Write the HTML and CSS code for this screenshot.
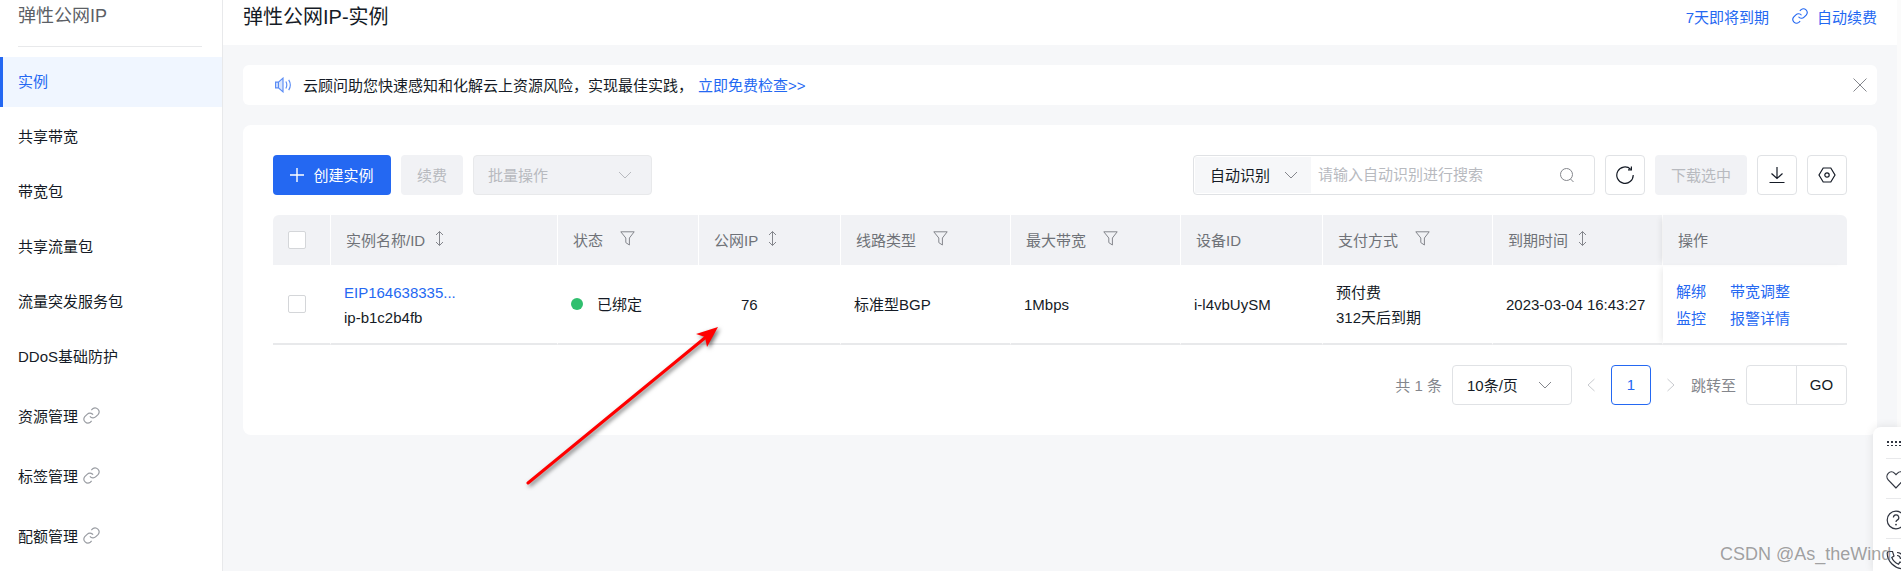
FILE: index.html
```html
<!DOCTYPE html>
<html lang="zh-CN">
<head>
    <meta charset="UTF-8">
    <title>弹性公网IP-实例</title>
    <link rel="stylesheet" href="styles.css">
</head>
<body>
    <svg class="icon-defs" width="0" height="0">
        <symbol id="i-chevron" viewBox="0 0 14 8"><path d="M1 1l6 6 6-6" fill="none" stroke="currentColor"/></symbol>
        <symbol id="i-filter" viewBox="0 0 15 15"><path d="M.8.8h13.4L9.4 7v7L5.8 11.6V7z" fill="none" stroke="currentColor"/></symbol>
        <symbol id="i-sort" viewBox="0 0 9 15"><path d="M4.5.5v14M1 4l3.5-3.5L8 4M1 11l3.5 3.5L8 11" fill="none" stroke="currentColor"/></symbol>
        <symbol id="i-link" viewBox="0 0 24 24"><path d="M10 13a5 5 0 0 0 7.5.5l3-3a5 5 0 0 0-7-7l-1.7 1.7M14 11a5 5 0 0 0-7.5-.5l-3 3a5 5 0 0 0 7 7l1.7-1.7" fill="none" stroke="currentColor" stroke-width="1.5"/></symbol>
    </svg>

    <div class="app">
        <aside class="sidebar">
            <div class="sidebar-title">弹性公网IP</div>
            <nav class="side-nav">
                <a class="nav-item active">实例</a>
                <a class="nav-item">共享带宽</a>
                <a class="nav-item">带宽包</a>
                <a class="nav-item">共享流量包</a>
                <a class="nav-item">流量突发服务包</a>
                <a class="nav-item">DDoS基础防护</a>
                <a class="nav-item nav-ext">资源管理 <svg class="ext-icon"><use href="#i-link"/></svg></a>
                <a class="nav-item nav-ext">标签管理 <svg class="ext-icon"><use href="#i-link"/></svg></a>
                <a class="nav-item nav-ext">配额管理 <svg class="ext-icon"><use href="#i-link"/></svg></a>
            </nav>
        </aside>

        <main class="main">
            <header class="page-head">
                <h1 class="page-title">弹性公网IP-实例</h1>
                <div class="head-actions">
                    <a class="link">7天即将到期</a>
                    <a class="link head-renew"><svg class="renew-icon"><use href="#i-link"/></svg>自动续费</a>
                </div>
            </header>

            <div class="content">
                <div class="notice">
                    <svg class="notice-icon" viewBox="0.5 1.5 14 13">
                        <path d="M1 5.5h2.5L7.5 2v12l-4-3.5H1zM3.5 5.5v5" fill="#dbe7fd" stroke="#5a8cf5"/>
                        <path d="M10 5c1 1.8 1 4.2 0 6M12.5 3.5c1.7 2.7 1.7 6.3 0 9" fill="none" stroke="#5a8cf5"/>
                    </svg>
                    <span class="notice-text">云顾问助您快速感知和化解云上资源风险，实现最佳实践，</span>
                    <a class="link notice-link">立即免费检查&gt;&gt;</a>
                    <svg class="notice-close" viewBox="0 0 14 14"><path d="M.5.5l13 13M13.5.5l-13 13" fill="none" stroke="currentColor"/></svg>
                </div>

                <section class="card">
                    <div class="toolbar">
                        <div class="tool-group">
                            <button class="btn btn-primary">
                                <svg class="plus-icon" viewBox="0 0 14 14"><path d="M7 0v14M0 7h14" fill="none" stroke="#fff" stroke-width="1.4"/></svg>创建实例
                            </button>
                            <button class="btn btn-disabled btn-renew">续费</button>
                            <div class="bulk-select">批量操作<svg class="chevron"><use href="#i-chevron"/></svg></div>
                        </div>
                        <div class="tool-group">
                            <div class="search">
                                <div class="search-type">自动识别<svg class="chevron"><use href="#i-chevron"/></svg></div>
                                <input class="search-input" placeholder="请输入自动识别进行搜索">
                                <svg class="search-icon" viewBox="0 0 16 16"><circle cx="7.5" cy="7.5" r="6" fill="none" stroke="currentColor"/><path d="M11.5 12l3 3" stroke="currentColor"/></svg>
                            </div>
                            <button class="icon-btn">
                                <svg viewBox="0 0 18 18"><path d="M14.6 3.2A8.2 8.2 0 1 0 17.2 9" fill="none" stroke="#151b26" stroke-width="1.2"/><path d="M15.4.4v3.4H12" fill="none" stroke="#151b26" stroke-width="1.2"/></svg>
                            </button>
                            <button class="btn btn-disabled btn-download">下载选中</button>
                            <button class="icon-btn">
                                <svg viewBox="0 0 18 18"><path d="M9 1v11.5M3.5 7.5L9 12.5l5.5-5M1.5 16.5h15" fill="none" stroke="#151b26" stroke-width="1.2"/></svg>
                            </button>
                            <button class="icon-btn">
                                <svg viewBox="0 0 18 18"><path d="M5.2 2h7.6L17 9l-4.2 7H5.2L1 9z" fill="none" stroke="#151b26" stroke-width="1.2"/><circle cx="9" cy="9" r="2.2" fill="none" stroke="#151b26" stroke-width="1.2"/></svg>
                            </button>
                        </div>
                    </div>

                    <table class="eip-table">
                        <colgroup>
                            <col class="col-check"><col class="col-name"><col class="col-status"><col class="col-ip">
                            <col class="col-wide"><col class="col-wide"><col class="col-ip"><col class="col-wide">
                            <col class="col-wide"><col class="col-op">
                        </colgroup>
                        <thead>
                            <tr>
                                <th class="cell-check"><span class="checkbox"></span></th>
                                <th>实例名称/ID<svg class="sort-icon"><use href="#i-sort"/></svg></th>
                                <th>状态<svg class="filter-icon"><use href="#i-filter"/></svg></th>
                                <th>公网IP<svg class="sort-icon"><use href="#i-sort"/></svg></th>
                                <th>线路类型<svg class="filter-icon"><use href="#i-filter"/></svg></th>
                                <th>最大带宽<svg class="filter-icon"><use href="#i-filter"/></svg></th>
                                <th>设备ID</th>
                                <th>支付方式<svg class="filter-icon"><use href="#i-filter"/></svg></th>
                                <th>到期时间<svg class="sort-icon"><use href="#i-sort"/></svg></th>
                                <th class="cell-op">操作</th>
                            </tr>
                        </thead>
                        <tbody>
                            <tr>
                                <td class="cell-check"><span class="checkbox"></span></td>
                                <td><a class="link">EIP164638335...</a><br>ip-b1c2b4fb</td>
                                <td><span class="status-dot"></span>已绑定</td>
                                <td><span class="ip-text">76</span></td>
                                <td>标准型BGP</td>
                                <td>1Mbps</td>
                                <td>i-l4vbUySM</td>
                                <td>预付费<br>312天后到期</td>
                                <td>2023-03-04 16:43:27</td>
                                <td class="cell-op">
                                    <div class="op-links">
                                        <a class="link">解绑</a><a class="link">带宽调整</a>
                                        <a class="link">监控</a><a class="link">报警详情</a>
                                    </div>
                                </td>
                            </tr>
                        </tbody>
                    </table>

                    <div class="pagination">
                        <span class="page-muted">共 1 条</span>
                        <div class="page-size">10条/页<svg class="chevron"><use href="#i-chevron"/></svg></div>
                        <svg class="page-arrow" viewBox="0 0 8 14"><path d="M7.5 1L1 7l6.5 6" fill="none" stroke="currentColor"/></svg>
                        <span class="page-current">1</span>
                        <svg class="page-arrow" viewBox="0 0 8 14"><path d="M.5 1L7 7l-6.5 6" fill="none" stroke="currentColor"/></svg>
                        <span class="page-muted page-jump-label">跳转至</span>
                        <div class="page-jump"><span class="jump-input"></span><span class="jump-go">GO</span></div>
                    </div>
                </section>
            </div>
        </main>
        <div class="scroll-strip"></div>
    </div>

    <div class="float-panel">
        <div class="float-item float-drag"><span class="drag-dots"></span></div>
        <div class="float-item">
            <svg viewBox="0 0 20 20"><path d="M10 18L2.2 9.8a4.8 4.8 0 0 1 0-6.5 4.6 4.6 0 0 1 6.5 0L10 4.600l1.3-1.3a4.6 4.6 0 0 1 6.5 0 4.8 4.8 0 0 1 0 6.5z" fill="none" stroke="#303540" stroke-width="1.2"/></svg>
        </div>
        <div class="float-item">
            <svg viewBox="0 0 20 20"><circle cx="10" cy="10" r="8.8" fill="none" stroke="#303540" stroke-width="1.2"/><path d="M7.4 7.6a2.7 2.7 0 1 1 3.8 2.5c-.8.4-1.2 1-1.2 1.9" fill="none" stroke="#303540" stroke-width="1.2"/><circle cx="10" cy="14.6" r=".9" fill="#303540"/></svg>
        </div>
        <div class="float-item">
            <svg viewBox="0 0 20 20"><path d="M3 1.5h3.5L8 6 5.8 7.5c1 2.8 3.5 5.3 6.7 6.7L14 12l4.500 1.500V17c0 1-.8 1.800-2 1.800C8.500 18.500 1.500 11.500 1.200 3.500c0-1 .8-2 1.800-2z" fill="none" stroke="#303540" stroke-width="1.2"/><path d="M11 2.500a6.500 6.500 0 0 1 6.500 6.500M11 5.500A3.500 3.500 0 0 1 14.500 9" fill="none" stroke="#303540" stroke-width="1.2"/></svg>
        </div>
    </div>

    <svg class="red-arrow" viewBox="0 0 205 170">
        <path d="M8 163L186 17" fill="none" stroke="#f00" stroke-width="3" stroke-linecap="round"/>
        <path d="M198 7L176 14l9 3 2 10z" fill="#f00"/>
    </svg>
    <div class="watermark">CSDN @As_theWind</div>
</body>
</html>
```

FILE: styles.css
```css
* {
    box-sizing: border-box;
}
html,
body {
    margin: 0;
    height: 100%;
    overflow: hidden;
}
body {
    position: relative;
    font-family: "Liberation Sans", "Noto Sans CJK SC", sans-serif;
    font-size: 15px;
    color: #151b26;
    background: #f6f7f9;
}
.icon-defs {
    position: absolute;
}
.app {
    display: flex;
    height: 571px;
}
.link {
    color: #2468f2;
}

/* sidebar */
.sidebar {
    width: 223px;
    flex: none;
    background: #fff;
    border-right: 1px solid #e8e9eb;
}
.sidebar-title {
    height: 47px;
    margin: 0 20px 10px 18px;
    border-bottom: 1px solid #e8e9eb;
    font-size: 18px;
    line-height: 32px;
    color: #5c5f66;
}
.nav-item {
    display: flex;
    align-items: center;
    gap: 4px;
    height: 50px;
    margin-bottom: 5px;
    padding: 0 0 4px 18px;
}
.nav-item.active {
    color: #2468f2;
    background: #f0f6ff;
    border-left: 3px solid #2468f2;
    padding-left: 15px;
}
.nav-ext {
    height: 60px;
    margin-bottom: 0;
}
.ext-icon {
    width: 19px;
    height: 19px;
    color: #9a9da3;
}

/* page */
.main {
    flex: 1;
    min-width: 0;
}
.scroll-strip {
    width: 4px;
    flex: none;
    background: #fbfbfb;
}
.page-head {
    display: flex;
    justify-content: space-between;
    height: 45px;
    padding: 0 20px;
    background: #fff;
}
.page-title {
    margin: 0;
    padding-top: 1px;
    font-size: 20px;
    font-weight: normal;
    line-height: 32px;
}
.head-actions {
    display: flex;
    align-items: center;
    gap: 22px;
    height: 32px;
}
.head-renew {
    display: flex;
    align-items: center;
    gap: 8px;
}
.renew-icon {
    width: 18px;
    height: 18px;
}
.content {
    padding: 20px;
}

/* notice */
.notice {
    display: flex;
    align-items: center;
    height: 40px;
    padding: 0 10px 0 32px;
    background: #fff;
    border-radius: 6px;
}
.notice-icon {
    width: 16px;
    height: 16px;
    margin-right: 12px;
}
.notice-text,
.notice-link {
    padding-bottom: 2px;
}
.notice-text {
    margin-right: 5px;
}
.notice-close {
    width: 14px;
    height: 14px;
    margin-left: auto;
    color: #84868c;
}

/* card */
.card {
    margin-top: 20px;
    padding: 30px;
    background: #fff;
    border-radius: 8px;
}
.toolbar {
    display: flex;
    justify-content: space-between;
}
.tool-group {
    display: flex;
    gap: 10px;
}
.btn {
    height: 40px;
    padding: 0 0 2px;
    border: 0;
    border-radius: 4px;
    font: inherit;
}
.btn-primary {
    display: flex;
    align-items: center;
    justify-content: center;
    gap: 9px;
    width: 118px;
    color: #fff;
    background: #2468f2;
}
.plus-icon {
    width: 14px;
    height: 14px;
    margin-top: 2px;
}
.btn-disabled {
    color: #b8babf;
    background: #f1f2f5;
}
.btn-renew {
    width: 62px;
}
.btn-download {
    width: 92px;
}
.bulk-select {
    display: flex;
    align-items: center;
    justify-content: space-between;
    width: 179px;
    height: 40px;
    padding: 0 19px 2px 14px;
    color: #b8babf;
    background: #f1f2f5;
    border: 1px solid #e8e9eb;
    border-radius: 4px;
}
.chevron {
    width: 14px;
    height: 8px;
    flex: none;
    margin-top: 2px;
    color: #84868c;
}
.bulk-select .chevron {
    color: #b8babf;
}
.search {
    display: flex;
    align-items: center;
    width: 402px;
    height: 40px;
    border: 1px solid #e0e2e5;
    border-radius: 4px;
    padding: 1px;
}
.search-type {
    display: flex;
    align-items: center;
    gap: 14px;
    height: 100%;
    width: 116px;
    flex: none;
    padding: 0 0 2px 15px;
    background: #f6f7f9;
}
.search-input {
    flex: 1;
    min-width: 0;
    height: 100%;
    padding: 0 7px 2px;
    border: 0;
    outline: 0;
    font: inherit;
}
.search-input::placeholder {
    color: #b8babf;
}
.search-icon {
    width: 16px;
    height: 16px;
    flex: none;
    margin-right: 18px;
    color: #84868c;
}
.icon-btn {
    display: flex;
    align-items: center;
    justify-content: center;
    width: 40px;
    height: 40px;
    padding: 0;
    background: #fff;
    border: 1px solid #e0e2e5;
    border-radius: 4px;
}
.icon-btn svg {
    width: 18px;
    height: 18px;
}

/* table */
.eip-table {
    width: 100%;
    margin-top: 20px;
    table-layout: fixed;
    border-collapse: separate;
    border-spacing: 0;
}
.col-check { width: 58px; }
.col-name { width: 227px; }
.col-status { width: 141px; }
.col-ip { width: 142px; }
.col-wide { width: 170px; }
.col-op { width: 184px; }
.eip-table th {
    height: 50px;
    padding: 0 15px 2px;
    font-weight: normal;
    text-align: left;
    color: #6f7278;
    background: #f1f2f5;
    border-right: 1px solid #fff;
    white-space: nowrap;
}
.eip-table th:first-child {
    border-top-left-radius: 6px;
}
.eip-table th:last-child {
    border-top-right-radius: 6px;
    border-right: 0;
}
.eip-table td {
    height: 80px;
    padding: 1px 13px 0;
    line-height: 25px;
    border-bottom: 2px solid #e8e9eb;
    border-right: 1px solid #fff;
    white-space: nowrap;
}
.eip-table td:last-child {
    border-right: 0;
}
.eip-table .cell-check {
    padding: 0 15px;
}
.eip-table .cell-op {
    box-shadow: -5px 0 6px -3px rgba(0, 0, 0, 0.08);
}
.checkbox {
    display: block;
    width: 18px;
    height: 18px;
    background: #fff;
    border: 1px solid #d4d6d9;
    border-radius: 2px;
}
.sort-icon {
    width: 9px;
    height: 15px;
    margin-left: 10px;
    color: #84868c;
}
.filter-icon {
    width: 15px;
    height: 15px;
    margin-left: 17px;
    color: #84868c;
}
.status-dot {
    display: inline-block;
    width: 12px;
    height: 12px;
    margin-right: 14px;
    background: #30bf6e;
    border-radius: 50%;
}
.ip-text {
    padding-left: 29px;
}
.op-links {
    display: grid;
    grid-template-columns: 30px 60px;
    gap: 2px 24px;
}

/* pagination */
.pagination {
    display: flex;
    align-items: center;
    justify-content: flex-end;
    height: 40px;
    margin-top: 20px;
}
.page-muted {
    padding-bottom: 2px;
    color: #84868c;
}
.page-size {
    display: flex;
    align-items: center;
    justify-content: space-between;
    width: 120px;
    height: 40px;
    margin: 0 15px 0 10px;
    padding: 0 19px 2px 14px;
    border: 1px solid #e0e2e5;
    border-radius: 4px;
}
.page-arrow {
    width: 8px;
    height: 14px;
    color: #c8cace;
}
.page-current {
    width: 40px;
    height: 40px;
    margin: 0 16px;
    line-height: 38px;
    text-align: center;
    color: #2468f2;
    border: 1px solid #2468f2;
    border-radius: 4px;
}
.page-jump-label {
    margin-left: 16px;
}
.page-jump {
    display: flex;
    width: 101px;
    height: 40px;
    margin-left: 10px;
    border: 1px solid #e0e2e5;
    border-radius: 4px;
}
.jump-input {
    width: 50px;
    border-right: 1px solid #e0e2e5;
}
.jump-go {
    flex: 1;
    line-height: 38px;
    text-align: center;
}

/* things lying over the page */
.float-panel {
    position: absolute;
    right: 0;
    top: 427px;
    width: 28px;
    height: 144px;
    padding-left: 13px;
    overflow: hidden;
    background: #fff;
    border-radius: 8px 0 0 0;
    box-shadow: 0 0 10px rgba(0, 0, 0, 0.1);
}
.float-item {
    display: flex;
    align-items: center;
    width: 40px;
    height: 40px;
    border-bottom: 1px solid #e8e9eb;
}
.float-drag {
    height: 32px;
}
.float-item svg {
    width: 20px;
    height: 20px;
    flex: none;
    margin-top: 2px;
}
.drag-dots {
    width: 16px;
    height: 6px;
    background: radial-gradient(circle, #303540 1px, transparent 1.2px) 0 0 / 4px 4px;
}
.red-arrow {
    position: absolute;
    left: 520px;
    top: 320px;
    width: 205px;
    height: 170px;
    filter: drop-shadow(2px 2px 2px rgba(0, 0, 0, 0.55));
}
.watermark {
    position: absolute;
    left: 1720px;
    top: 542px;
    font-size: 18px;
    line-height: 24px;
    color: rgba(110, 110, 110, 0.65);
    white-space: nowrap;
}
```
